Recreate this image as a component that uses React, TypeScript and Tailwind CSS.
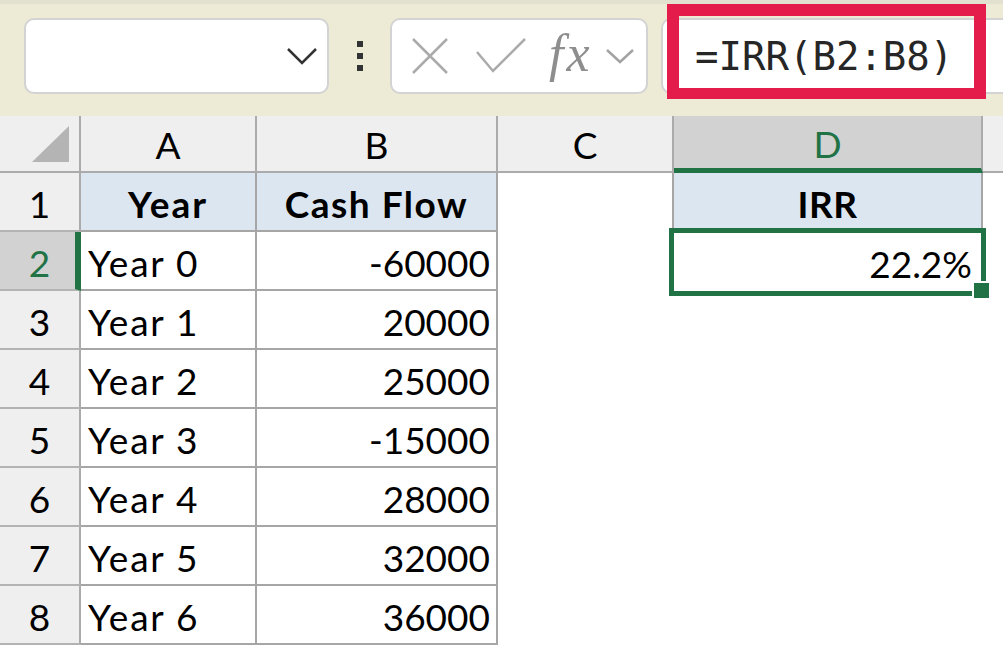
import React from 'react'

const rows = [
  { year: 'Year 0', cash: '-60000' },
  { year: 'Year 1', cash: '20000' },
  { year: 'Year 2', cash: '25000' },
  { year: 'Year 3', cash: '-15000' },
  { year: 'Year 4', cash: '28000' },
  { year: 'Year 5', cash: '32000' },
  { year: 'Year 6', cash: '36000' },
]

const Toolbar: React.FC = () => (
  <div className="relative flex h-[116px] items-start border-t-4 border-[#e2e0cf] bg-[#edead6] pl-[24px] pt-[14px]">
    {/* name box */}
    <div className="flex h-[76px] w-[305px] items-center justify-end rounded-[10px] border-2 border-[#d3d3d3] bg-white pr-[9px]">
      <svg width="32" height="20" viewBox="0 0 32 20">
        <path d="M2 3 L16 17 L30 3" stroke="#333" strokeWidth="2.5" fill="none" />
      </svg>
    </div>

    <div className="ml-[28px] mt-[23px] flex flex-col gap-[6px]">
      <span className="h-[6px] w-[6px] bg-[#333]" />
      <span className="h-[6px] w-[6px] bg-[#333]" />
      <span className="h-[6px] w-[6px] bg-[#333]" />
    </div>

    {/* cancel / enter / fx */}
    <div className="ml-[27px] flex h-[76px] w-[258px] items-center rounded-[10px] border-2 border-[#d3d3d3] bg-white">
      <svg className="ml-[20px]" width="36" height="36" viewBox="0 0 36 36">
        <path d="M1 1 L35 35 M35 1 L1 35" stroke="#ababab" strokeWidth="2.5" fill="none" />
      </svg>
      <svg className="ml-[28px]" width="50" height="36" viewBox="0 0 50 36">
        <path d="M1 14 L17 33 L49 1" stroke="#ababab" strokeWidth="2.5" fill="none" />
      </svg>
      <span className="mb-[5px] ml-[23px] text-[52px] italic leading-none tracking-[3px] text-[#8e8e8e] [font-family:'Liberation_Serif',serif]">
        fx
      </span>
      <svg className="ml-[12px]" width="30" height="16" viewBox="0 0 30 16">
        <path d="M2 2 L15 14 L28 2" stroke="#a3a3a3" strokeWidth="2.5" fill="none" />
      </svg>
    </div>

    {/* formula input */}
    <div className="ml-[13px] flex h-[76px] flex-1 items-center rounded-l-[10px] border-2 border-r-0 border-[#d3d3d3] bg-white pl-[32px]">
      <span className="text-[39px] leading-none text-[#262626] [font-family:'DejaVu_Sans_Mono',monospace]">
        =IRR(B2:B8)
      </span>
    </div>

    {/* highlight annotation */}
    <div className="absolute left-[667px] top-0 h-[95px] w-[319px] border-[12px] border-b-[11px] border-[#e31c4b]" />
  </div>
)

const ColumnHeaders: React.FC = () => (
  <div className="flex h-[57px] bg-[#efefef] text-[37px] leading-none">
    <div className="flex w-[81px] items-end justify-end border-b-2 border-r-2 border-[#ababab] pb-[9px] pr-[10px]">
      <svg width="37" height="36" viewBox="0 0 37 36">
        <path d="M37 0 L37 36 L0 36 Z" fill="#b4b4b4" />
      </svg>
    </div>
    <div className="flex w-[176px] items-center justify-center border-b-2 border-r-2 border-[#ababab] pt-[2px]">A</div>
    <div className="flex w-[241px] items-center justify-center border-b-2 border-r-2 border-[#ababab] pt-[2px]">B</div>
    <div className="flex w-[176px] items-center justify-center border-b-2 border-r-2 border-[#ababab] pt-[2px]">C</div>
    <div className="flex w-[309px] items-center justify-center border-r-2 border-b-[5px] border-[#ababab] border-b-[#217346] bg-[#d2d2d2] pt-[2px] text-[#217346]">
      D
    </div>
    <div className="flex-1 border-b-2 border-[#ababab]" />
  </div>
)

const RowHeader: React.FC<{ n: number }> = ({ n }) => (
  <div
    className={
      n === 2
        ? 'flex w-[81px] items-center justify-center border-b-2 border-r-[6px] border-[#b3b3b3] border-r-[#217346] bg-[#d2d2d2] pl-[4px] pt-[4px] text-[#217346]'
        : 'flex w-[81px] items-center justify-center border-b-2 border-r-2 border-[#b3b3b3] border-r-[#ababab] bg-[#efefef] pt-[4px]'
    }
  >
    {n}
  </div>
)

const App: React.FC = () => {
  return (
    <div className="h-[648px] w-[1003px] overflow-hidden bg-white text-black [font-family:Lato,sans-serif]">
      <Toolbar />
      <ColumnHeaders />

      <div className="text-[37px] leading-none">
        {/* row 1: headings */}
        <div className="flex h-[59px]">
          <RowHeader n={1} />
          <div className="flex w-[176px] items-center justify-center border-b-2 border-r-2 border-[#a6a6a6] bg-[#dce6f1] pt-[4px] font-bold tracking-[2px]">
            Year
          </div>
          <div className="flex w-[241px] items-center justify-center border-b-2 border-r-2 border-[#a6a6a6] bg-[#dce6f1] pt-[4px] font-bold tracking-[1.5px]">
            Cash Flow
          </div>
          <div className="w-[176px] border-r-2 border-[#a6a6a6]" />
          <div className="flex w-[309px] items-center justify-center border-b-2 border-r-2 border-[#a6a6a6] bg-[#dce6f1] pt-[4px] font-bold tracking-[0.5px]">
            IRR
          </div>
          <div className="flex-1" />
        </div>

        {rows.map((row, i) => (
          <div key={row.year} className="flex h-[59px]">
            <RowHeader n={i + 2} />
            <div className="flex w-[176px] items-center border-b-2 border-r-2 border-[#a6a6a6] pl-[7px] pt-[4px] tracking-[1.8px]">
              {row.year}
            </div>
            <div className="flex w-[241px] items-center justify-end border-b-2 border-r-2 border-[#a6a6a6] pr-[6px] pt-[4px]">
              {row.cash}
            </div>
            <div className="w-[176px]" />
            {i === 0 ? (
              <div className="relative flex w-[309px] items-center justify-end pr-[11px] pt-[4px]">
                22.2%
                {/* active cell selection */}
                <div className="absolute -bottom-[5px] -left-[5px] -right-[3px] -top-[4px] border-[5px] border-[#217346]" />
                <div className="absolute left-[298px] top-[49px] h-[19px] w-[19px] border-2 border-white bg-[#217346]" />
              </div>
            ) : (
              <div className="w-[309px]" />
            )}
            <div className="flex-1" />
          </div>
        ))}
      </div>
    </div>
  )
}

export default App
